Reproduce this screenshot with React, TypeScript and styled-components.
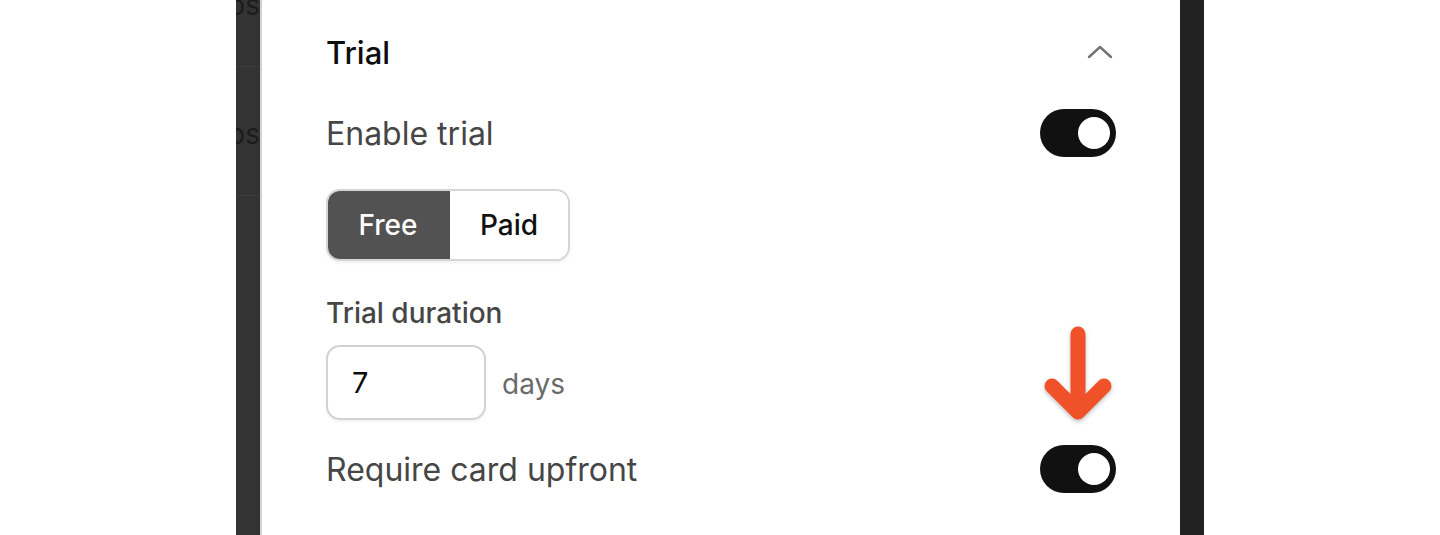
import React, { useState } from "react";
import styled, { createGlobalStyle } from "styled-components";

const GlobalStyle = createGlobalStyle`
  html, body { margin: 0; padding: 0; background: #ffffff; }
  body { font-family: Inter, "Noto Sans", sans-serif; -webkit-font-smoothing: antialiased; }
  * { box-sizing: border-box; }
`;

const Page = styled.div`
  display: flex;
  justify-content: center;
  height: 535px;
  overflow: hidden;
  background: #ffffff;
`;

const Frame = styled.div`
  width: 968px;
  height: 535px;
  display: grid;
  grid-template-columns: 24px 1fr 24px;
  overflow: hidden;
`;

const Backdrop = styled.div`
  background: #333333;
  display: flex;
  flex-direction: column;
  margin-top: -62px;
  overflow: hidden;
`;

const BackdropRow = styled.div<{ $last?: boolean }>`
  height: 129px;
  flex: none;
  display: flex;
  align-items: center;
  justify-content: flex-end;
  padding-top: 6px;
  border-bottom: ${(p) => (p.$last ? "0" : "1px solid #3d3d3d")};
  font-size: 28px;
  color: #1c1c1c;
  white-space: nowrap;
  overflow: hidden;
`;

const RightShade = styled.div`
  background: #222222;
`;

const Drawer = styled.div`
  position: relative;
  background: #ffffff;
  border-left: 2px solid #d2d2d2;
  padding: 32px 64px 0 64px;
  display: flex;
  flex-direction: column;
`;

const HeaderRow = styled.div`
  height: 40px;
  display: flex;
  align-items: center;
  justify-content: space-between;
`;

const Title = styled.h2`
  margin: 0;
  font-size: 31px;
  font-weight: 500;
  color: #0d0d0d;
`;

const IconButton = styled.button`
  border: 0;
  background: transparent;
  padding: 0;
  width: 32px;
  height: 32px;
  display: flex;
  align-items: center;
  justify-content: center;
  cursor: pointer;
`;

const SettingRow = styled.div<{ $top: number }>`
  margin-top: ${(p) => p.$top}px;
  display: flex;
  align-items: center;
  justify-content: space-between;
  height: 48px;
`;

const Label = styled.span`
  font-size: 32px;
  color: #464646;
  font-weight: 400;
`;

const Track = styled.button<{ $on: boolean }>`
  position: relative;
  width: 76px;
  height: 48px;
  border-radius: 24px;
  border: 0;
  padding: 0;
  background: ${(p) => (p.$on ? "#111111" : "#cfcfcf")};
  cursor: pointer;
`;

const Knob = styled.span<{ $on: boolean }>`
  position: absolute;
  top: 8px;
  left: ${(p) => (p.$on ? 38 : 6)}px;
  width: 32px;
  height: 32px;
  border-radius: 50%;
  background: #ffffff;
`;

const Segmented = styled.div`
  margin-top: 32px;
  align-self: flex-start;
  display: flex;
  height: 72px;
  border: 2px solid #d6d6d6;
  border-radius: 14px;
  overflow: hidden;
  box-shadow: 0 2px 3px rgba(0, 0, 0, 0.06);
`;

const Segment = styled.button<{ $active: boolean; $w: number }>`
  width: ${(p) => p.$w}px;
  border: 0;
  margin: ${(p) => (p.$active ? "-2px 0 -2px -2px" : "0")};
  height: ${(p) => (p.$active ? "72px" : "68px")};
  background: ${(p) => (p.$active ? "#525252" : "#ffffff")};
  color: ${(p) => (p.$active ? "#ffffff" : "#111111")};
  font-family: inherit;
  font-size: 28px;
  font-weight: 500;
  cursor: pointer;
`;

const FieldLabel = styled.div`
  margin-top: 34px;
  font-size: 28px;
  line-height: 36px;
  color: #464646;
  font-weight: 500;
`;

const DurationRow = styled.div`
  margin-top: 14px;
  display: flex;
  align-items: center;
  gap: 16px;
`;

const NumberInput = styled.input`
  width: 160px;
  height: 75px;
  border: 2px solid #d2d2d2;
  border-radius: 14px;
  padding: 0 0 0 24px;
  font-family: inherit;
  font-size: 29px;
  color: #0d0d0d;
  outline: none;
  box-shadow: 0 2px 3px rgba(0, 0, 0, 0.05);
`;

const Unit = styled.span`
  font-size: 28px;
  color: #6b6b6b;
  padding-top: 2px;
`;

const Annotation = styled.svg`
  position: absolute;
  left: 778px;
  top: 322px;
  filter: drop-shadow(0 2px 2px rgba(0, 0, 0, 0.25));
`;

function Toggle({ on, onChange }: { on: boolean; onChange: () => void }) {
  return (
    <Track $on={on} onClick={onChange} aria-pressed={on}>
      <Knob $on={on} />
    </Track>
  );
}

export default function App() {
  const [trial, setTrial] = useState(true);
  const [card, setCard] = useState(true);
  const [mode, setMode] = useState<"free" | "paid">("free");
  const [days, setDays] = useState("7");

  return (
    <>
      <GlobalStyle />
      <Page>
        <Frame>
          <Backdrop>
            <BackdropRow>Apps</BackdropRow>
            <BackdropRow>Apps</BackdropRow>
            <BackdropRow $last />
          </Backdrop>
          <Drawer>
            <HeaderRow>
              <Title>Trial</Title>
              <IconButton aria-label="Collapse">
                <svg width="28" height="16" viewBox="0 0 28 16">
                  <polyline
                    points="3,13 14,3 25,13"
                    fill="none"
                    stroke="#737373"
                    strokeWidth="2.4"
                    strokeLinecap="round"
                    strokeLinejoin="round"
                  />
                </svg>
              </IconButton>
            </HeaderRow>
            <SettingRow $top={37}>
              <Label>Enable trial</Label>
              <Toggle on={trial} onChange={() => setTrial(!trial)} />
            </SettingRow>
            <Segmented>
              <Segment $w={124} $active={mode === "free"} onClick={() => setMode("free")}>
                Free
              </Segment>
              <Segment $w={118} $active={mode === "paid"} onClick={() => setMode("paid")}>
                Paid
              </Segment>
            </Segmented>
            <FieldLabel>Trial duration</FieldLabel>
            <DurationRow>
              <NumberInput value={days} onChange={(e) => setDays(e.target.value)} />
              <Unit>days</Unit>
            </DurationRow>
            <SettingRow $top={25}>
              <Label>Require card upfront</Label>
              <Toggle on={card} onChange={() => setCard(!card)} />
            </SettingRow>
            <Annotation width="80" height="104" viewBox="0 0 80 104">
              <g fill="none" stroke="#EF5129" strokeWidth="15" strokeLinecap="round" strokeLinejoin="round">
                <line x1="38" y1="12" x2="38" y2="88" />
                <polyline points="12,64 38,90 64,64" />
              </g>
            </Annotation>
          </Drawer>
          <RightShade />
        </Frame>
      </Page>
    </>
  );
}
